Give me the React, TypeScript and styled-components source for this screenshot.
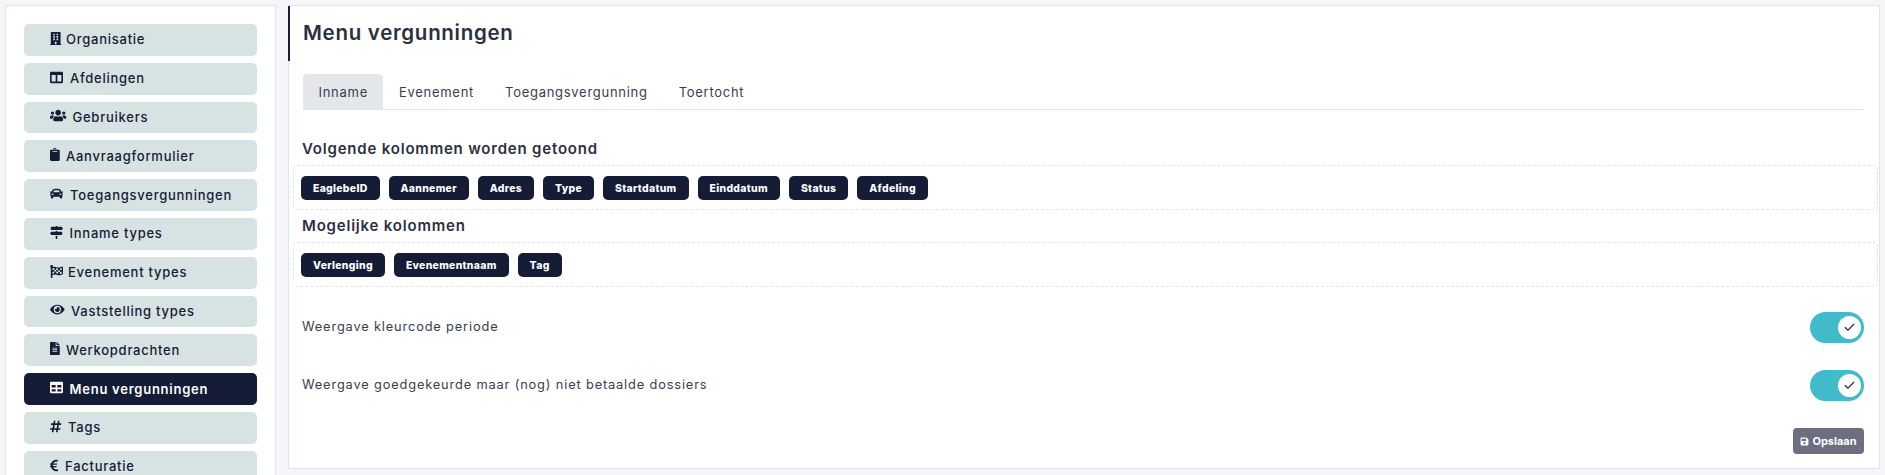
import { ComponentType, SVGProps } from "react";
import styled, { createGlobalStyle } from "styled-components";
import { Check } from "lucide-react";
import {
  FaBuilding,
  FaCar,
  FaClipboard,
  FaColumns,
  FaEuroSign,
  FaEye,
  FaFileAlt,
  FaFlagCheckered,
  FaHashtag,
  FaMapSigns,
  FaSave,
  FaTable,
  FaUsers,
} from "react-icons/fa";

const GlobalStyle = createGlobalStyle`
  html, body {
    margin: 0;
    height: 475px;
    overflow: hidden;
    background: #f4f6fa;
    font-family: Inter, "Liberation Sans", sans-serif;
  }
`;

type MenuItem = {
  label: string;
  Icon: ComponentType<SVGProps<SVGSVGElement>>;
  slot: number;
  active?: boolean;
};

// slot is the room the icon takes before the label starts
const menu: MenuItem[] = [
  { label: "Organisatie", Icon: FaBuilding, slot: 16 },
  { label: "Afdelingen", Icon: FaColumns, slot: 20 },
  { label: "Gebruikers", Icon: FaUsers, slot: 22.5 },
  { label: "Aanvraagformulier", Icon: FaClipboard, slot: 16 },
  { label: "Toegangsvergunningen", Icon: FaCar, slot: 20 },
  { label: "Inname types", Icon: FaMapSigns, slot: 19.5 },
  { label: "Evenement types", Icon: FaFlagCheckered, slot: 18 },
  { label: "Vaststelling types", Icon: FaEye, slot: 21 },
  { label: "Werkopdrachten", Icon: FaFileAlt, slot: 16 },
  { label: "Menu vergunningen", Icon: FaTable, slot: 19.5, active: true },
  { label: "Tags", Icon: FaHashtag, slot: 18 },
  { label: "Facturatie", Icon: FaEuroSign, slot: 15 },
];

const tabs = ["Inname", "Evenement", "Toegangsvergunning", "Toertocht"];
const shown = ["EaglebeID", "Aannemer", "Adres", "Type", "Startdatum", "Einddatum", "Status", "Afdeling"];
const possible = ["Verlenging", "Evenementnaam", "Tag"];
const options = ["Weergave kleurcode periode", "Weergave goedgekeurde maar (nog) niet betaalde dossiers"];

export default function App() {
  return (
    <Layout>
      <GlobalStyle />
      <Sidebar>
        {menu.map(({ label, Icon, slot, active }) => (
          <MenuButton key={label} $active={active}>
            <IconSlot $width={slot}>
              <Icon preserveAspectRatio="xMinYMid meet" />
            </IconSlot>
            <span>{label}</span>
          </MenuButton>
        ))}
      </Sidebar>
      <Panel>
        <Title>Menu vergunningen</Title>
        <Body>
          <Tabs>
            {tabs.map((tab, i) => (
              <Tab key={tab} $active={i === 0}>
                {tab}
              </Tab>
            ))}
          </Tabs>
          <FirstHeading>Volgende kolommen worden getoond</FirstHeading>
          <DropZone>
            {shown.map((c) => (
              <Chip key={c}>{c}</Chip>
            ))}
          </DropZone>
          <Heading>Mogelijke kolommen</Heading>
          <DropZone>
            {possible.map((c) => (
              <Chip key={c}>{c}</Chip>
            ))}
          </DropZone>
          <Options>
            {options.map((o) => (
              <OptionRow key={o}>
                <span>{o}</span>
                <Toggle>
                  <Knob>
                    <Check size={13} strokeWidth={2.2} />
                  </Knob>
                </Toggle>
              </OptionRow>
            ))}
          </Options>
          <Footer>
            <SaveButton>
              <FaSave />
              Opslaan
            </SaveButton>
          </Footer>
        </Body>
      </Panel>
    </Layout>
  );
}

const Layout = styled.div`
  display: flex;
  align-items: flex-start;
  gap: 12px;
  padding: 5px 5px 0 5px;
  height: 470px;
  box-sizing: border-box;
`;

const Sidebar = styled.aside`
  width: 271px;
  height: 470px;
  flex: none;
  box-sizing: border-box;
  padding: 18px 18px 0;
  background: #fff;
  border: 1px solid #dde6e8;
  border-bottom: none;
  display: flex;
  flex-direction: column;
  gap: 7px;
  overflow: hidden;
`;

const MenuButton = styled.div<{ $active?: boolean }>`
  height: 31.8px;
  flex: none;
  box-sizing: border-box;
  padding-left: 26px;
  border-radius: 5px;
  display: flex;
  align-items: center;
  font-size: 13px;
  font-weight: ${(p) => (p.$active ? 600 : 500)};
  letter-spacing: 0.75px;
  background: ${(p) => (p.$active ? "#141c36" : "#d7e2e3")};
  color: ${(p) => (p.$active ? "#fff" : "#141c36")};
  span {
    margin-top: -1px;
  }
`;

const IconSlot = styled.div<{ $width: number }>`
  width: ${(p) => p.$width}px;
  flex: none;
  display: flex;
  margin-top: -3px;
  svg {
    width: 100%;
    height: 13px;
  }
`;

const Panel = styled.main`
  flex: 1;
  height: 464px;
  box-sizing: border-box;
  background: #fff;
  border: 1px solid #dde6e8;
`;

const Title = styled.h1`
  margin: 0 0 0 -1px;
  height: 55px;
  box-sizing: border-box;
  padding: 15px 0 0 13px;
  border-left: 2px solid #141c36;
  font-size: 20.5px;
  line-height: 24px;
  font-weight: 600;
  letter-spacing: 0.7px;
  color: #2c2f3f;
`;

const Body = styled.div`
  padding: 13px 1px 0 4px;
`;

const Tabs = styled.div`
  display: flex;
  margin: 0 14px 0 10px;
  height: 35px;
  border-bottom: 1px solid #dde6e8;
`;

const Tab = styled.div<{ $active?: boolean }>`
  padding: 0 15.5px;
  display: flex;
  align-items: center;
  font-size: 13px;
  letter-spacing: 0.72px;
  color: #3a3d4e;
  border-radius: 4px 4px 0 0;
  background: ${(p) => (p.$active ? "#e4e7ea" : "transparent")};
`;

const Heading = styled.h2`
  margin: 7px 0 8px 9px;
  font-size: 15px;
  line-height: 17px;
  font-weight: 600;
  letter-spacing: 0.8px;
  color: #2c2f3f;
`;

const FirstHeading = styled(Heading)`
  margin-top: 30px;
`;

const DropZone = styled.div`
  height: 45px;
  box-sizing: border-box;
  padding: 10px 7px;
  border: 1px dashed #dde6e8;
  border-radius: 4px;
  display: flex;
  gap: 9px;
`;

const Chip = styled.div`
  height: 24px;
  padding: 0 12px;
  border-radius: 5px;
  display: flex;
  align-items: center;
  background: #141c36;
  color: #fff;
  font-size: 10.4px;
  font-weight: 800;
  letter-spacing: 0.32px;
`;

const Options = styled.div`
  margin-top: 25px;
  padding: 0 14px 0 9px;
  display: flex;
  flex-direction: column;
  gap: 27px;
`;

const OptionRow = styled.div`
  display: flex;
  justify-content: space-between;
  align-items: center;
  font-size: 12.8px;
  letter-spacing: 0.85px;
  color: #3a3d4e;
  span {
    margin-top: -2px;
  }
`;

const Toggle = styled.div`
  width: 54px;
  height: 31px;
  box-sizing: border-box;
  padding-right: 3px;
  border-radius: 16px;
  background: #41bbc9;
  display: flex;
  align-items: center;
  justify-content: flex-end;
`;

const Knob = styled.div`
  width: 23px;
  height: 23px;
  border-radius: 50%;
  background: #fff;
  display: flex;
  align-items: center;
  justify-content: center;
  color: #2c2f3f;
`;

const Footer = styled.div`
  margin-top: 27px;
  padding-right: 14px;
  display: flex;
  justify-content: flex-end;
`;

const SaveButton = styled.div`
  width: 71px;
  height: 26px;
  border-radius: 4px;
  background: #6b6f80;
  color: #fff;
  display: flex;
  align-items: center;
  justify-content: center;
  gap: 3px;
  font-size: 11px;
  font-weight: 700;
  svg {
    width: 9px;
    height: 9px;
  }
`;
